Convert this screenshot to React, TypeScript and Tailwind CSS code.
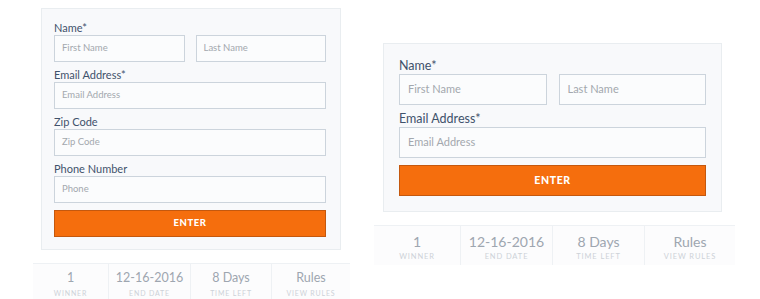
type Size = "sm" | "lg";

const styles = {
  sm: {
    wrap: "w-[317px] pt-[8px]",
    card: "mx-[8px] w-[300px] pl-[12px] pr-[14px] pt-[12px] pb-[12px]",
    label: "text-[11px] leading-[14px]",
    gapRow: "mt-[6px]",
    twoCols: "grid grid-cols-2 gap-[11px]",
    input: "h-[27px] px-[7px] text-[9.5px]",
    button: "mt-[7px] h-[27px] text-[9.5px]",
    stats: "mt-[13px] h-[40px] grid-cols-[75px_82px_81px_79px]",
    value: "text-[12.5px] leading-[16px] pt-[6px]",
    caption: "text-[7px] leading-[10px] mt-[2px]",
  },
  lg: {
    wrap: "w-[361px] pt-[43px]",
    card: "ml-[9px] w-[339px] px-[15px] pt-[14px] pb-[15px]",
    label: "text-[12.5px] leading-[16px]",
    gapRow: "mt-[6px]",
    twoCols: "grid grid-cols-2 gap-[12px]",
    input: "h-[31px] px-[8px] text-[11px]",
    button: "mt-[7px] h-[31px] text-[10.5px]",
    stats: "mt-[13px] h-[40px] grid-cols-[86px_92px_92px_91px]",
    value: "text-[14px] leading-[18px] pt-[7px]",
    caption: "text-[7.5px] leading-[10px] mt-[1px]",
  },
};

const stats = [
  { value: "1", label: "WINNER" },
  { value: "12-16-2016", label: "END DATE" },
  { value: "8 Days", label: "TIME LEFT" },
  { value: "Rules", label: "VIEW RULES" },
];

function Field({ label, placeholder, size }: { label: string; placeholder: string; size: Size }) {
  const s = styles[size];
  return (
    <div className={s.gapRow}>
      <div className={`${s.label} text-[#3f526b]`}>{label}</div>
      <div className={`${s.input} flex items-center border border-[#ccd4dc] bg-[#fbfcfd] text-[#a3a8ae]`}>
        {placeholder}
      </div>
    </div>
  );
}

function EntryForm({ size, showExtra }: { size: Size; showExtra: boolean }) {
  const s = styles[size];
  return (
    <div className={s.wrap}>
      <div className={`${s.card} border border-[#e9edf0] bg-[#f8f9fb]`}>
        <div className={`${s.label} text-[#3f526b]`}>Name*</div>
        <div className={s.twoCols}>
          <div className={`${s.input} flex items-center border border-[#ccd4dc] bg-[#fbfcfd] text-[#a3a8ae]`}>First Name</div>
          <div className={`${s.input} flex items-center border border-[#ccd4dc] bg-[#fbfcfd] text-[#a3a8ae]`}>Last Name</div>
        </div>
        <Field label="Email Address*" placeholder="Email Address" size={size} />
        {showExtra && (
          <>
            <Field label="Zip Code" placeholder="Zip Code" size={size} />
            <Field label="Phone Number" placeholder="Phone" size={size} />
          </>
        )}
        <div
          className={`${s.button} flex items-center justify-center border border-[#c4580e] bg-[#f56e0d] font-black tracking-[0.06em] text-white`}
        >
          ENTER
        </div>
      </div>

      {/* stats strip */}
      <div className={`${s.stats} grid border-t border-[#eef1f4] bg-[#fcfcfd]`}>
        {stats.map((st, i) => (
          <div key={st.label} className={`text-center ${i > 0 ? "border-l border-[#eef1f4]" : ""}`}>
            <div className={`${s.value} text-[#9ea6b0]`}>{st.value}</div>
            <div className={`${s.caption} text-[#cdd2d8] tracking-[0.12em]`}>{st.label}</div>
          </div>
        ))}
      </div>
    </div>
  );
}

export default function App() {
  return (
    <div className="flex h-[299px] w-[760px] items-start overflow-hidden bg-white font-['Lato',sans-serif]">
      <div className="ml-[33px]">
        <EntryForm size="sm" showExtra={true} />
      </div>
      <div className="ml-[24px]">
        <EntryForm size="lg" showExtra={false} />
      </div>
    </div>
  );
}
